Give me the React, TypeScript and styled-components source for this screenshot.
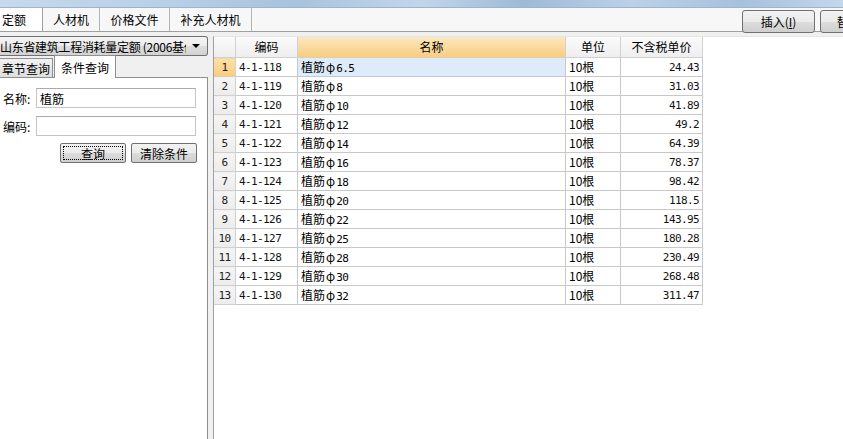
import React from 'react'
import styled, { createGlobalStyle } from 'styled-components'

const GlobalStyle = createGlobalStyle`
  html, body {
    margin: 0;
    padding: 0;
    background: #ffffff;
  }
  body {
    font-family: "Noto Sans CJK SC", "DejaVu Sans", sans-serif;
    font-size: 12px;
    color: #000;
  }
`

const Window = styled.div`
  width: 843px;
  height: 439px;
  overflow: hidden;
  display: flex;
  flex-direction: column;
  background: #f0f0f0;
`

const TitleStrip = styled.div`
  height: 7px;
  flex: none;
  background: linear-gradient(90deg, #c7d9ec 0%, #b8cfe6 20%, #a9c2dd 35%, #c2d6ea 50%, #9fb9d6 62%, #bcd1e8 75%, #a7c0dc 88%, #c4d7eb 100%);
  border-bottom: 1px solid #9fb4cc;
`

const TopBar = styled.div`
  height: 23px;
  flex: none;
  display: flex;
  align-items: flex-end;
  border-bottom: 1px solid #a0a0a0;
  background: #f7f7f7;
`

const TabStrip = styled.div`
  display: flex;
  height: 100%;
`

const MainTab = styled.div<{ $active?: boolean; $w: number }>`
  width: ${p => p.$w}px;
  height: 100%;
  display: flex;
  align-items: center;
  justify-content: center;
  box-sizing: border-box;
  font-size: 12px;
  border-right: 1px solid #b4b4b4;
  background: ${p => (p.$active ? '#ffffff' : 'transparent')};
  ${p => p.$active && 'justify-content: flex-start; padding-left: 2px; border-right: 1px solid #a0a0a0;'}
`

const Spacer = styled.div`
  flex: 1;
`

const ToolButtons = styled.div`
  display: flex;
  gap: 5px;
  align-self: center;
  margin-top: 4px;
  margin-right: -50px;
`

const ToolButton = styled.button`
  height: 23px;
  width: 73px;
  font-family: "Noto Sans CJK SC", sans-serif;
  font-size: 12px;
  border: 1px solid #707070;
  border-radius: 3px;
  background: linear-gradient(#f2f2f2 0%, #ebebeb 50%, #dddddd 51%, #cfcfcf 100%);
  padding: 0;
  color: #000;
  u {
    text-decoration: underline;
  }
`

const Body = styled.div`
  flex: 1;
  display: flex;
  min-height: 0;
`

const LeftPanel = styled.div`
  width: 208px;
  flex: none;
  display: flex;
  flex-direction: column;
  padding-top: 4px;
`

const Dropdown = styled.div`
  height: 20px;
  box-sizing: border-box;
  border: 1px solid #707070;
  border-left: none;
  border-radius: 0 3px 3px 0;
  background: linear-gradient(#f4f4f4 0%, #ececec 50%, #dedede 51%, #d2d2d2 100%);
  display: flex;
  align-items: center;
  white-space: nowrap;
  overflow: hidden;
  font-size: 12px;
  letter-spacing: -0.3px;
`

const DropText = styled.span`
  flex: 1;
  overflow: hidden;
`

const DropArrow = styled.span`
  width: 0;
  height: 0;
  border-left: 4px solid transparent;
  border-right: 4px solid transparent;
  border-top: 4px solid #000;
  margin: 0 7px 0 6px;
`

const SubTabs = styled.div`
  height: 22px;
  display: flex;
  align-items: flex-end;
`

const SubTab = styled.div<{ $active?: boolean }>`
  box-sizing: border-box;
  display: flex;
  align-items: center;
  justify-content: center;
  font-size: 12px;
  border: 1px solid #8e8f8f;
  border-bottom: ${p => (p.$active ? 'none' : '1px solid #8e8f8f')};
  background: ${p => (p.$active ? '#ffffff' : 'linear-gradient(#f2f2f2, #dedede)')};
  height: ${p => (p.$active ? '23px' : '20px')};
  width: ${p => (p.$active ? '62px' : '54px')};
  margin-left: ${p => (p.$active ? '1px' : '-1px')};
  position: relative;
  z-index: ${p => (p.$active ? 1 : 0)};
`

const SubPane = styled.div`
  flex: 1;
  background: #ffffff;
  border-top: 1px solid #8e8f8f;
  border-right: 1px solid #8e8f8f;
  margin-top: -1px;
  padding-top: 10px;
  display: flex;
  flex-direction: column;
  gap: 8px;
`

const FieldRow = styled.div`
  display: flex;
  align-items: center;
  padding-left: 3px;
`

const FieldLabel = styled.span`
  width: 33px;
  font-size: 12px;
`

const FieldInput = styled.div`
  width: 160px;
  height: 20px;
  box-sizing: border-box;
  border: 1px solid #c5c5c5;
  border-top-color: #ababab;
  padding-left: 3px;
  display: flex;
  align-items: center;
  font-size: 12px;
`

const ButtonRow = styled.div`
  display: flex;
  gap: 5px;
  padding-left: 60px;
  margin-top: -1px;
`

const FormButton = styled.button<{ $focused?: boolean }>`
  height: 20px;
  width: 66px;
  padding: 0;
  font-family: "Noto Sans CJK SC", sans-serif;
  font-size: 12px;
  color: #000;
  border: 1px solid #707070;
  border-radius: 2px;
  background: linear-gradient(#f2f2f2 0%, #ebebeb 50%, #dddddd 51%, #cfcfcf 100%);
  ${p => p.$focused && 'outline: 1px dotted #000; outline-offset: -4px;'}
`

const Splitter = styled.div`
  width: 5px;
  flex: none;
  background: #f0f0f0;
`

const GridArea = styled.div`
  flex: 1;
  background: #ffffff;
  border-left: 1px solid #a0a0a0;
  margin-top: 4px;
  border-top: 1px solid #e6e6e6;
`

const Table = styled.table`
  border-collapse: collapse;
  table-layout: fixed;
  font-size: 12px;
  line-height: 1;
`

const HeadCell = styled.th<{ $active?: boolean; $w: number }>`
  width: ${p => p.$w}px;
  height: 20px;
  padding: 0;
  font-weight: normal;
  font-size: 12px;
  line-height: 1;
  text-align: center;
  border-right: 1px solid #d0d0d0;
  border-bottom: 1px solid #d0d0d0;
  background: ${p =>
    p.$active ? 'linear-gradient(#fde7bd 0%, #f8cd80 100%)' : 'linear-gradient(#fbfbfb, #eeeeee)'};
`

const NumCell = styled.td<{ $selected?: boolean }>`
  height: 18px;
  line-height: 1;
  padding: 0;
  text-align: center;
  font-family: "DejaVu Sans Mono", "Liberation Mono", monospace;
  font-size: 11px;
  letter-spacing: -0.6px;
  color: #222;
  border-right: 1px solid #d0d0d0;
  border-bottom: 1px solid #d0d0d0;
  background: ${p => (p.$selected ? 'linear-gradient(#fde1a8, #f8cc7f)' : 'linear-gradient(#f5f5f5, #ececec)')};
`

const Cell = styled.td<{ $right?: boolean; $selected?: boolean; $mono?: boolean }>`
  height: 18px;
  line-height: 1;
  padding: 0 3px;
  white-space: nowrap;
  overflow: hidden;
  text-align: ${p => (p.$right ? 'right' : 'left')};
  border-right: 1px solid #c8c8c8;
  border-bottom: 1px solid #c8c8c8;
  background: ${p => (p.$selected ? '#ddebfa' : '#ffffff')};
  font-size: 12px;
  ${p => p.$mono && 'font-family: "DejaVu Sans Mono", "Liberation Mono", monospace; font-size: 11px; letter-spacing: -0.6px; color: #111;'}
`

const Phi = styled.span`
  font-size: 12px;
  margin: 0 1px;
`

const Mono = styled.span`
  font-family: "DejaVu Sans Mono", "Liberation Mono", monospace;
  font-size: 11px;
  letter-spacing: -0.6px;
`

const rows = [
  ['4-1-118', '6.5', '24.43'],
  ['4-1-119', '8', '31.03'],
  ['4-1-120', '10', '41.89'],
  ['4-1-121', '12', '49.2'],
  ['4-1-122', '14', '64.39'],
  ['4-1-123', '16', '78.37'],
  ['4-1-124', '18', '98.42'],
  ['4-1-125', '20', '118.5'],
  ['4-1-126', '22', '143.95'],
  ['4-1-127', '25', '180.28'],
  ['4-1-128', '28', '230.49'],
  ['4-1-129', '30', '268.48'],
  ['4-1-130', '32', '311.47'],
]

export default function App() {
  return (
    <Window>
      <GlobalStyle />
      <TitleStrip />
      <TopBar>
        <TabStrip>
          <MainTab $active $w={43}>定额</MainTab>
          <MainTab $w={57}>人材机</MainTab>
          <MainTab $w={70}>价格文件</MainTab>
          <MainTab $w={82}>补充人材机</MainTab>
        </TabStrip>
        <Spacer />
        <ToolButtons>
          <ToolButton>
            插入(<u>I</u>)
          </ToolButton>
          <ToolButton>替换(R)</ToolButton>
        </ToolButtons>
      </TopBar>
      <Body>
        <LeftPanel>
          <Dropdown>
            <DropText>山东省建筑工程消耗量定额 (2006基价)</DropText>
            <DropArrow />
          </Dropdown>
          <SubTabs>
            <SubTab>章节查询</SubTab>
            <SubTab $active>条件查询</SubTab>
          </SubTabs>
          <SubPane>
            <FieldRow>
              <FieldLabel>名称:</FieldLabel>
              <FieldInput>植筋</FieldInput>
            </FieldRow>
            <FieldRow>
              <FieldLabel>编码:</FieldLabel>
              <FieldInput />
            </FieldRow>
            <ButtonRow>
              <FormButton $focused>查询</FormButton>
              <FormButton>清除条件</FormButton>
            </ButtonRow>
          </SubPane>
        </LeftPanel>
        <Splitter />
        <GridArea>
          <Table>
            <thead>
              <tr>
                <HeadCell $w={21} />
                <HeadCell $w={61}>编码</HeadCell>
                <HeadCell $w={267} $active>
                  名称
                </HeadCell>
                <HeadCell $w={54}>单位</HeadCell>
                <HeadCell $w={81}>不含税单价</HeadCell>
              </tr>
            </thead>
            <tbody>
              {rows.map(([code, dia, price], i) => (
                <tr key={code}>
                  <NumCell $selected={i === 0}>{i + 1}</NumCell>
                  <Cell $mono>{code}</Cell>
                  <Cell $selected={i === 0}>
                    植筋<Phi>φ</Phi>
                    <Mono>{dia}</Mono>
                  </Cell>
                  <Cell>10根</Cell>
                  <Cell $right $mono>
                    {price}
                  </Cell>
                </tr>
              ))}
            </tbody>
          </Table>
        </GridArea>
      </Body>
    </Window>
  )
}
